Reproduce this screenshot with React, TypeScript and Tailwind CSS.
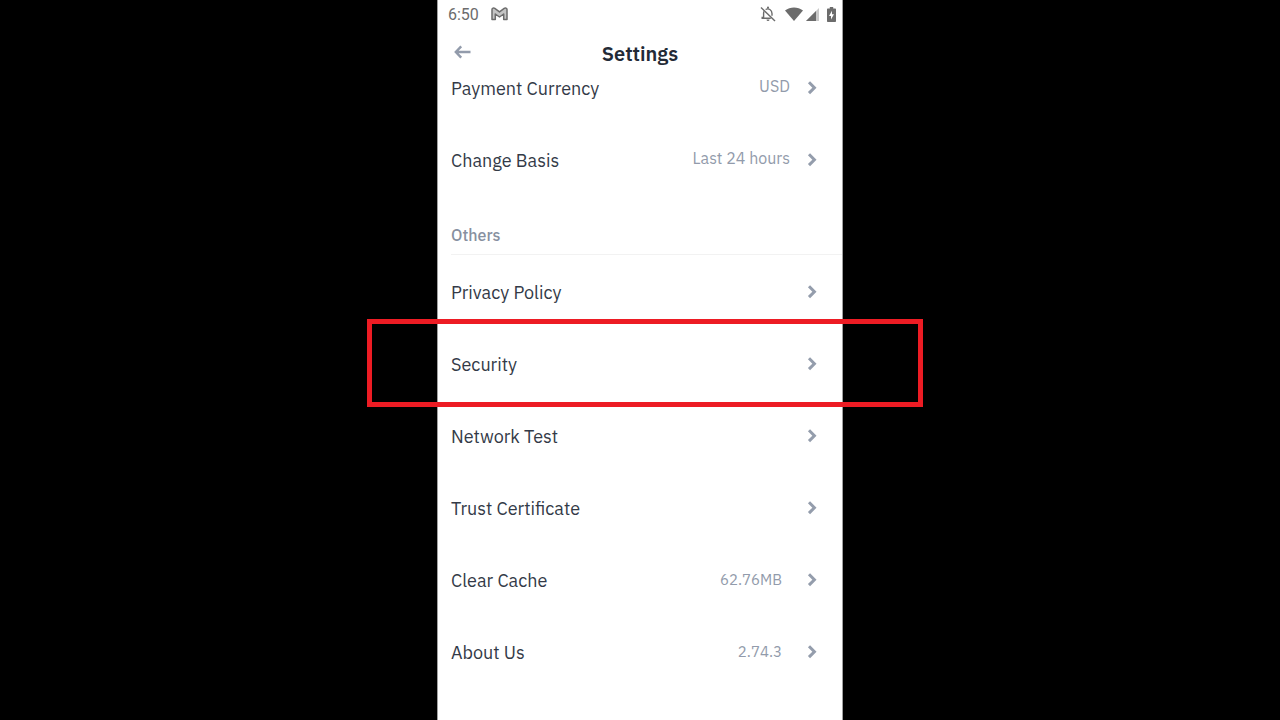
import type { ReactNode } from "react";

interface SettingsItem {
  label: string;
  value?: string;
  valueClass?: string;
  highlighted?: boolean;
}

const preferences: SettingsItem[] = [
  { label: "Payment Currency", value: "USD", valueClass: "mr-4 pb-1 text-base" },
  { label: "Change Basis", value: "Last 24 hours", valueClass: "mr-4 pb-1 text-base" },
];

const others: SettingsItem[] = [
  { label: "Privacy Policy" },
  { label: "Security", highlighted: true },
  { label: "Network Test" },
  { label: "Trust Certificate" },
  { label: "Clear Cache", value: "62.76MB", valueClass: "mr-6 text-[15px]" },
  { label: "About Us", value: "2.74.3", valueClass: "mr-6 text-[15px]" },
];

function ChevronIcon() {
  return (
    <svg className="w-3 h-4 shrink-0" viewBox="0 0 12 16" fill="none" aria-hidden="true">
      <path d="M3 2.3 8.4 7.7 3 13.1" stroke="#949dac" strokeWidth="3" />
    </svg>
  );
}

function SettingsRow({ item }: { item: SettingsItem }) {
  return (
    <li className="relative">
      <button type="button" className="flex h-6 w-full items-center text-left cursor-pointer">
        <span className="flex-1 pt-[2px] text-lg leading-6 text-[#333a47]">{item.label}</span>
        {item.value && (
          <span className={`leading-6 text-[#929bab] ${item.valueClass}`}>{item.value}</span>
        )}
        <ChevronIcon />
      </button>
      {item.highlighted && (
        <div className="absolute -top-[33px] -bottom-[31px] -left-[84px] -right-[105px] border-5 border-[#ed1c24] pointer-events-none" />
      )}
    </li>
  );
}

function SettingsList({ children }: { children: ReactNode }) {
  return <ul className="flex flex-col gap-12 pl-[13px] pr-6">{children}</ul>;
}

function StatusBar() {
  return (
    <div className="flex h-7 items-center pl-[10px] pr-[6px] text-[#6c6c6c]">
      <span className="font-[Roboto,sans-serif] pt-[2px] text-base leading-6">6:50</span>
      <svg className="ml-3 w-[17px] h-[14px]" viewBox="0 0 17 14" fill="none" aria-label="Gmail">
        <path
          d="M1 2.6C1 1 2.7.6 3.8 1.4l4.7 3.5 4.7-3.5C14.300.6 16 1 16 2.6v9.900h-3.300V7L8.500 10 4.300 7v5.500H1z"
          fill="#c4c4c4"
          stroke="currentColor"
          strokeWidth="1.5"
          strokeLinejoin="round"
        />
      </svg>
      <div className="ml-auto flex items-center">
        <svg className="w-4 h-4" viewBox="0 0 16 16" fill="none" aria-label="Notifications muted">
          <path d="M1 1.5 15 15" stroke="currentColor" strokeWidth="1.4" />
          <path
            d="M5.6 3.5C8.5 1.8 12 3.8 12 7.5v2.2M4 5.4c-.3.7-.4 1.4-.4 2.1v4H2.2v.7h8.6"
            stroke="currentColor"
            strokeWidth="1.4"
          />
          <path d="M7 2.5V1.6a1 1 0 0 1 2 0v.9zM6.5 13.4h3a1.5 1.5 0 0 1-3 0z" fill="currentColor" />
        </svg>
        <svg className="ml-[9px] w-[18px] h-[14px]" viewBox="0 0 18 14" aria-label="Wi-Fi">
          <path d="M0 3.5c5.2-4.1 12.8-4.1 18 0L9 14z" fill="currentColor" />
        </svg>
        <svg className="ml-[3px] w-[13px] h-[13px]" viewBox="0 0 13 13" aria-label="Mobile signal">
          <path d="M13 0v13H0z" fill="#c9c9c9" />
          <path d="M10 3v10H0z" fill="currentColor" />
        </svg>
        <svg className="ml-[8px] w-[9px] h-[15px]" viewBox="0 0 9 15" aria-label="Battery charging">
          <path d="M2.8 0h3.4v1.5H8c.6 0 1 .4 1 1V14c0 .6-.4 1-1 1H1c-.6 0-1-.4-1-1V2.5c0-.6.4-1 1-1h1.8z" fill="currentColor" />
          <path d="M5 3.8 2 8.9h2v3.7l3-5.3H5z" fill="#fff" />
        </svg>
      </div>
    </div>
  );
}

export default function App() {
  return (
    <div className="flex min-h-screen justify-center overflow-x-hidden bg-black font-['IBM_Plex_Sans',Roboto,sans-serif]">
      <main className="w-full max-w-[406px] border-x border-[#a0a0a0] bg-white pb-14">
        <StatusBar />

        <header className="grid h-12 grid-cols-[1fr_auto_1fr] items-center px-4">
          <button type="button" aria-label="Back" className="w-5 cursor-pointer">
            <svg className="w-[18px] h-[14px]" viewBox="0 0 18 14" fill="none">
              <path d="M7.2 1.3 1.8 7l5.4 5.7M2 7h14.5" stroke="#929bab" strokeWidth="2.4" />
            </svg>
          </button>
          <h1 className="pt-1 text-xl font-semibold leading-6 text-[#232a36]">Settings</h1>
        </header>

        <SettingsList>
          {preferences.map((item) => (
            <SettingsRow key={item.label} item={item} />
          ))}
        </SettingsList>

        <section>
          <div className="mt-[51px] mb-[25px] ml-[13px] border-b border-[#f2f2f2]">
            <h2 className="pb-[7px] text-base font-medium leading-6 text-[#8790a0]">Others</h2>
          </div>
          <SettingsList>
            {others.map((item) => (
              <SettingsRow key={item.label} item={item} />
            ))}
          </SettingsList>
        </section>
      </main>
    </div>
  );
}
